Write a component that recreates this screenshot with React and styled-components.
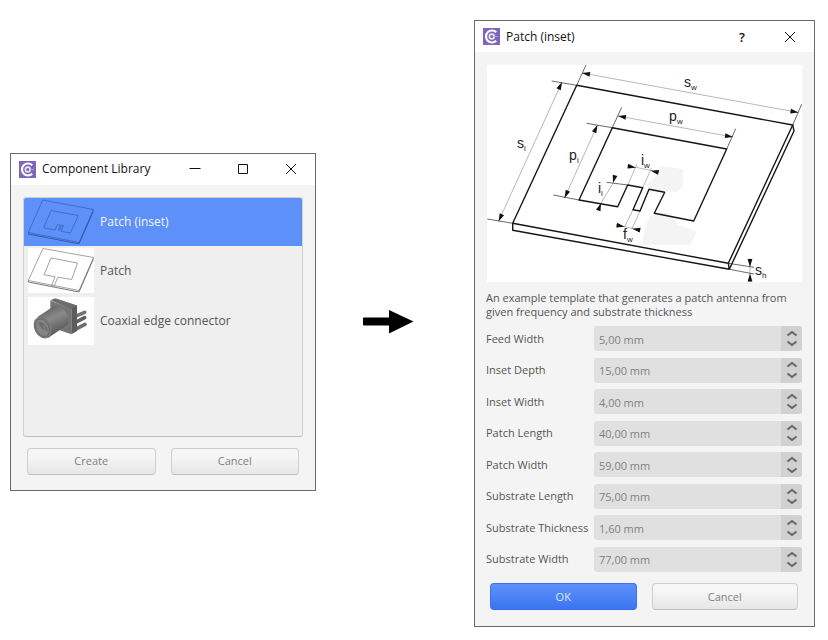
import React, { useId } from "react";
import styled, { createGlobalStyle } from "styled-components";

const GlobalStyle = createGlobalStyle`
  * { box-sizing: border-box; }
  body {
    margin: 0;
    background: #fff;
    color: #555;
    font: 11px/14px "Open Sans", "Noto Sans", sans-serif;
  }
`;

const Stage = styled.main`
  display: grid;
  grid-template-columns: minmax(0, 306fr) minmax(0, 158fr) minmax(0, 341fr);
  align-items: center;
  min-height: 100vh;
  padding: 7px 13px 0 10px;
`;

const Window = styled.section`
  border: 1px solid #6a6a6a;
  background: #f4f4f4;
  margin-bottom: ${(p) => (p.$raised ? 4 : 0)}px;
`;

const TitleBar = styled.header`
  display: flex;
  align-items: center;
  height: 31px;
  padding-left: 8px;
  background: #fff;
  color: #111;
`;

const Title = styled.h1`
  flex: 1;
  margin: 0 0 0 6px;
  font: 400 12px/16px "Open Sans", sans-serif;
  white-space: nowrap;
`;

const WindowButton = styled.button`
  display: grid;
  place-items: center;
  width: 48px;
  height: 31px;
  padding: 0;
  border: 0;
  background: none;
  color: #111;
  font: 600 13px/16px "Open Sans", sans-serif;
`;

const LibraryBody = styled.div`
  padding: 12px 12px 15px;
`;

const TemplateList = styled.ul`
  min-height: 240px;
  margin: 0;
  padding: 0;
  border: 1px solid #cfcfcf;
  border-bottom-color: #bdbdbd;
  border-radius: 3px;
  background: #efefef;
  list-style: none;
  overflow: hidden;
`;

const TemplateRow = styled.li`
  display: flex;
  align-items: center;
  gap: 6px;
  height: ${(p) => (p.$selected ? 48 : 50)}px;
  padding-left: 4px;
  background: ${(p) => (p.$selected ? "#5e90fa" : "transparent")};
  color: ${(p) => (p.$selected ? "#f1f5ff" : "#555")};
  font: 12px/16px "Open Sans", sans-serif;
`;

const Thumb = styled.svg`
  flex: none;
  width: 66px;
  height: ${(p) => (p.$tall ? 48 : 45)}px;
  background: ${(p) => (p.$clear ? "transparent" : "#fff")};
`;

const ButtonRow = styled.div`
  display: grid;
  grid-template-columns: 1fr 1fr;
  gap: 15px;
  padding: 0 4px;
  margin-top: 11px;
`;

const PushButton = styled.button`
  height: 27px;
  padding: 0;
  border: 1px solid ${(p) => (p.$primary ? "#3b74ef" : "#cfcfcf")};
  border-bottom-color: ${(p) => (p.$primary ? "#346be6" : "#bfbfbf")};
  border-radius: 4px;
  background: ${(p) =>
    p.$primary
      ? "linear-gradient(#5e90fa, #3a75f2)"
      : "linear-gradient(#f6f6f6 30%, #e6e6e6)"};
  color: ${(p) => (p.$primary ? "#dfe9ff" : "#808080")};
  font: inherit;
`;

const PatchBody = styled.div`
  padding: 13px 12px 16px 11px;
`;

const Diagram = styled.svg`
  display: block;
  width: 100%;
  padding-left: 1px;
`;

const Description = styled.p`
  margin: 9px 0 7px;
`;

const Fields = styled.div`
  display: grid;
  align-content: space-between;
  min-height: 246px;
`;

const FieldRow = styled.div`
  display: grid;
  grid-template-columns: 108px 1fr;
  align-items: center;
`;

const SpinBox = styled.div`
  display: flex;
  height: 25px;
  border-radius: 3px;
  background: #e0e0e0;
  overflow: hidden;
`;

const SpinInput = styled.input`
  flex: 1;
  min-width: 0;
  padding: 2px 5px 0;
  border: 0;
  background: none;
  color: #808080;
  font: inherit;
`;

const SpinButtons = styled.div`
  display: grid;
  grid-template-rows: 1fr 1fr;
  width: 21px;
  padding: 2px 0;
  background: #d1d1d1;
`;

const SpinButton = styled.button`
  display: grid;
  place-items: center;
  padding: 0;
  border: 0;
  background: none;
`;

const ArrowDrawing = styled.svg`
  justify-self: center;
  width: 52px;
  height: 25px;
  margin: 0 14px 4px 0;
`;

const Logo = () => (
  <svg width="17" height="17" viewBox="0 0 17 17" aria-hidden="true">
    <rect width="17" height="17" fill="#7e66bd" />
    <path d="M13.2 4.2A6 6 0 1 0 13.2 12.8" fill="none" stroke="#fff" strokeWidth="2.2" />
    <circle cx="8.8" cy="8.5" r="2.4" fill="none" stroke="#ece7f7" strokeWidth="1.6" />
    <path d="M11.5 8.5H15" stroke="#a896d4" strokeWidth="1" />
  </svg>
);

const windowGlyphs = {
  Minimize: "M0.5 5.5H11.5",
  Maximize: "M1.5 1.5H10.5V10.5H1.5Z",
  Close: "M1 1L11 11M11 1L1 11",
};

const WindowControl = ({ name }) => (
  <WindowButton type="button" aria-label={name}>
    {name === "Help" ? (
      "?"
    ) : (
      <svg width="12" height="12" viewBox="0 0 12 12" fill="none" stroke="currentColor" strokeWidth="1">
        <path d={windowGlyphs[name]} />
      </svg>
    )}
  </WindowButton>
);

const AppWindow = ({ title, controls, raised, children }) => (
  <Window aria-label={title} $raised={raised}>
    <TitleBar>
      <Logo />
      <Title>{title}</Title>
      {controls.map((c) => (
        <WindowControl key={c} name={c} />
      ))}
    </TitleBar>
    {children}
  </Window>
);

const InsetThumb = () => (
  <Thumb $clear viewBox="28 199 66 45" fill="none" stroke="#2c559f" strokeWidth="0.6" aria-hidden="true">
    <path d="M42.7 200L93.4 209.5L79 242.5L28.3 232.5Z" />
    <path d="M28.3 232.5V234L79 243.8L93.4 211" strokeWidth="0.9" />
    <path d="M51 210.5L78.3 215.5L70.3 233L61 231.3L63.5 225.5L61.7 225.2L59.5 230.2L58.3 230L60.5 225L57.5 224.4L55 230L43.7 227.8Z" />
  </Thumb>
);

const PatchThumb = () => (
  <Thumb viewBox="28 249 66 45" fill="none" stroke="#666" strokeWidth="0.6" aria-hidden="true">
    <path d="M43 249.5L93.5 258.5L79 291.5L28.3 281.5Z" />
    <path d="M28.3 281.5V283L79 293L93.5 259.7" strokeWidth="0.9" />
    <path d="M55 277.7L44 275.7L51 259L77.5 264L71.7 280.5L57.8 278.2L54 287.5M55 277.7L51.5 287" />
  </Thumb>
);

const CoaxThumb = () => (
  <Thumb $tall viewBox="24 156 198 144" aria-hidden="true">
    <defs>
      <linearGradient id="barrel" x1="0.2" y1="0" x2="0.65" y2="1">
        <stop offset="0" stopColor="#5a5a5a" />
        <stop offset="0.4" stopColor="#8a8a8a" />
        <stop offset="1" stopColor="#4c4c4c" />
      </linearGradient>
    </defs>
    <g strokeWidth="11" strokeLinecap="round">
      <path d="M166 214L194 202" stroke="#747474" />
      <path d="M166 232L194 218" stroke="#606060" />
      <path d="M160 256L195 238" stroke="#6c6c6c" />
    </g>
    <path d="M91 166L106 160L170 181L153 192Z" fill="#6d6d6d" />
    <path d="M91 167L154 190V268L91 246Z" fill="#747474" />
    <path d="M154 190L171 180V258L154 268Z" fill="#5c5c5c" />
    <path d="M53 215L99 185C127 180 151 205 145 238L84 279Z" fill="url(#barrel)" />
    <ellipse cx="68" cy="248" rx="25" ry="34" transform="rotate(-27 68 248)" fill="#7a7a7a" />
    <ellipse cx="67" cy="248" rx="19" ry="28" transform="rotate(-27 67 248)" fill="#858585" stroke="#5c5c5c" strokeWidth="2" />
    <path d="M56 232C66 226 84 244 84 262C76 258 60 250 56 232Z" fill="#6c6c6c" />
    <path d="M71 240C70 247 77 257 83 261" fill="none" stroke="#989898" strokeWidth="2" />
  </Thumb>
);

const DiagramLabel = ({ x, y, base, sub, gap = 7 }) => (
  <text x={x} y={y} fontSize="14">
    {base}
    <tspan x={x + gap} y={y + 3} fontSize="8">{sub}</tspan>
  </text>
);

const heads = [
  [582, 73, 190], [798.5, 112.5, 10], [618, 116, 190], [733, 137, 10],
  [562, 82, -65], [498.5, 221.5, 115], [597.5, 125, -65], [564.5, 198, 115],
  [635.7, 167.7, 12], [650.7, 170.7, 192], [613, 183, 105], [601, 203, -70],
  [624.5, 226.7, 12], [632.3, 228.7, 190], [750, 267, 90], [750, 273.5, -90],
];

const PatchDiagram = () => (
  <Diagram viewBox="487 65 315 217" role="img" aria-label="Inset-fed patch antenna dimensions">
    <rect x="487" y="65" width="315" height="217" fill="#fff" />
    <g fill="#f4f4f4">
      <path d="M660 166L683 169V187L677 192L650 190L646 185L655 177Z" />
      <path d="M659 213H671L677 224L697 232L690 245H642L645 229L650 216Z" />
    </g>
    <g fill="none" stroke="#888" strokeWidth="0.6">
      <path d="M582 73L798.5 112.5M618 116L733 137M562 82L498.5 221.5M597.5 125L564.5 198" />
      <path d="M613 183L601 203M627 165.5L659 172M616 224.5L640 230.2M627.7 185L637 164M642.7 187.7L651.5 168.3M633 209.7L624.3 227.3M640 211L631.7 229.3M750 258V282" />
    </g>
    <g fill="none" stroke="#444" strokeWidth="0.8">
      <path d="M576.7 85.3L586 65M551.7 81L576.7 85.3M792.7 125L801.7 104.3M612.3 127.7L621.7 107.3M586.7 123.3L612.3 127.7M726.7 149L735.7 128.7" />
      <path d="M487.3 219L512.7 223.3M553.3 195L579 200M606.7 182.3L627.7 185M728.3 263.3L754 267.3M729.3 269.3L754 274" />
    </g>
    <g fill="none" stroke="#161616" strokeWidth="1.4" strokeLinejoin="round">
      <path d="M576.7 85.3L792.7 125L728.3 263.3L512.7 223.3Z" />
      <path d="M512.7 223.3V230.3L729.3 269.3L794 131L792.7 125M728.3 263.3L729.3 269.3" />
      <path d="M612.3 127.7L726.7 149L693.7 221L654.3 213.3L664.7 192.3L649 189.3L640 211L633 209.7L642.7 187.7L627.7 185L617.7 206.7L579 200Z" />
    </g>
    {heads.map(([x, y, angle]) => (
      <path key={`${x}-${y}`} d="M0 0L-8 -2.4V2.4Z" fill="#111" transform={`translate(${x} ${y}) rotate(${angle})`} />
    ))}
    <g fill="#222" fontFamily='"Liberation Sans", Arial, sans-serif'>
      <DiagramLabel x={684} y={87} base="s" sub="w" />
      <DiagramLabel x={669} y={121} base="p" sub="w" gap={8} />
      <DiagramLabel x={517} y={148} base="s" sub="l" />
      <DiagramLabel x={569} y={160} base="p" sub="l" gap={8} />
      <DiagramLabel x={641} y={165} base="i" sub="w" gap={3} />
      <DiagramLabel x={598} y={193} base="i" sub="l" gap={3} />
      <DiagramLabel x={623} y={239} base="f" sub="w" gap={4} />
      <DiagramLabel x={755} y={275} base="s" sub="h" />
    </g>
  </Diagram>
);

const Chevron = ({ down }) => (
  <svg width="12" height="7" viewBox="0 0 12 7" fill="none" stroke="#666" strokeWidth="2">
    <path d={down ? "M1.5 1.5L6 5L10.5 1.5" : "M1.5 5.5L6 2L10.5 5.5"} />
  </svg>
);

const Field = ({ label, value }) => {
  const id = useId();
  return (
    <FieldRow>
      <label htmlFor={id}>{label}</label>
      <SpinBox>
        <SpinInput id={id} defaultValue={value} />
        <SpinButtons>
          <SpinButton type="button" aria-label={`Increase ${label}`}><Chevron /></SpinButton>
          <SpinButton type="button" aria-label={`Decrease ${label}`}><Chevron down /></SpinButton>
        </SpinButtons>
      </SpinBox>
    </FieldRow>
  );
};

const fields = [
  ["Feed Width", "5,00 mm"],
  ["Inset Depth", "15,00 mm"],
  ["Inset Width", "4,00 mm"],
  ["Patch Length", "40,00 mm"],
  ["Patch Width", "59,00 mm"],
  ["Substrate Length", "75,00 mm"],
  ["Substrate Thickness", "1,60 mm"],
  ["Substrate Width", "77,00 mm"],
];

export default function App() {
  return (
    <>
      <GlobalStyle />
      <Stage>
        <AppWindow title="Component Library" controls={["Minimize", "Maximize", "Close"]} raised>
          <LibraryBody>
            <TemplateList>
              <TemplateRow $selected><InsetThumb />Patch (inset)</TemplateRow>
              <TemplateRow><PatchThumb />Patch</TemplateRow>
              <TemplateRow><CoaxThumb />Coaxial edge connector</TemplateRow>
            </TemplateList>
            <ButtonRow>
              <PushButton type="button">Create</PushButton>
              <PushButton type="button">Cancel</PushButton>
            </ButtonRow>
          </LibraryBody>
        </AppWindow>
        <ArrowDrawing viewBox="0 0 52 25" aria-hidden="true">
          <path d="M2 8.5H27V1L51.5 12.5L27 24.5V16.5H2Q1 16.5 1 15.5V9.5Q1 8.5 2 8.5Z" fill="#000" />
        </ArrowDrawing>
        <AppWindow title="Patch (inset)" controls={["Help", "Close"]}>
          <PatchBody>
            <PatchDiagram />
            <Description>
              An example template that generates a patch antenna from given frequency and substrate thickness
            </Description>
            <Fields>
              {fields.map(([label, value]) => (
                <Field key={label} label={label} value={value} />
              ))}
            </Fields>
            <ButtonRow>
              <PushButton type="button" $primary>OK</PushButton>
              <PushButton type="button">Cancel</PushButton>
            </ButtonRow>
          </PatchBody>
        </AppWindow>
      </Stage>
    </>
  );
}
